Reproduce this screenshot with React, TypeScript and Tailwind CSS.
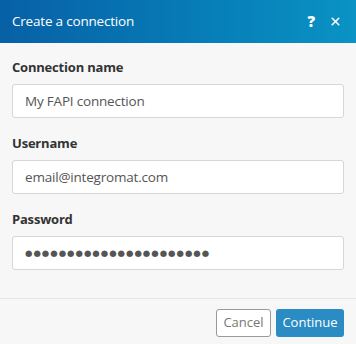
import { X } from "lucide-react";

const fields = [
  { label: "Connection name", value: "My FAPI connection" },
  { label: "Username", value: "email@integromat.com" },
  { label: "Password", value: "●●●●●●●●●●●●●●●●●●●●●●", password: true },
];

const App = () => {
  return (
    <div className="w-[356px] h-[344px] flex flex-col bg-[#f7f7f7] font-['Open_Sans',sans-serif] overflow-hidden">
      <div className="h-[43px] flex items-center justify-between pl-3 pr-[14px] bg-gradient-to-r from-[#0860a6] to-[#0a93c4] text-white">
        <span className="text-[13.5px] tracking-[-0.2px]">Create a connection</span>
        <div className="flex items-center gap-[14px]">
          <span className="text-[15px] font-extrabold leading-none">?</span>
          <X className="h-[13px] w-[13px]" strokeWidth={3} />
        </div>
      </div>
      <div className="flex-1 px-3 pt-[14px]">
        {fields.map((f) => (
          <div key={f.label} className="mb-[15px]">
            <div className="h-5 text-[13px] font-bold text-[#333] leading-5 tracking-[-0.2px]">{f.label}</div>
            <div className="mt-[7px] h-[34px] rounded-[3px] border border-[#d6d6d6] bg-white flex items-center px-3">
              {f.password ? (
                <span className="text-[8.5px] tracking-[1.0px] text-[#555] font-['DejaVu_Sans',sans-serif]">{f.value}</span>
              ) : (
                <span className="text-[13.5px] tracking-[-0.2px] text-[#555]">{f.value}</span>
              )}
            </div>
          </div>
        ))}
      </div>
      <div className="h-[46px] border-t border-[#e6e6e6] flex justify-end items-start gap-[5px] pt-[10px] pr-3">
        <button className="h-[28px] w-[55px] rounded-[3px] border border-[#999] bg-white text-[13px] text-[#777]">
          Cancel
        </button>
        <button className="h-[28px] w-[68px] rounded-[3px] bg-[#2b8bc3] text-[13px] text-white">
          Continue
        </button>
      </div>
    </div>
  );
};

export default App;
